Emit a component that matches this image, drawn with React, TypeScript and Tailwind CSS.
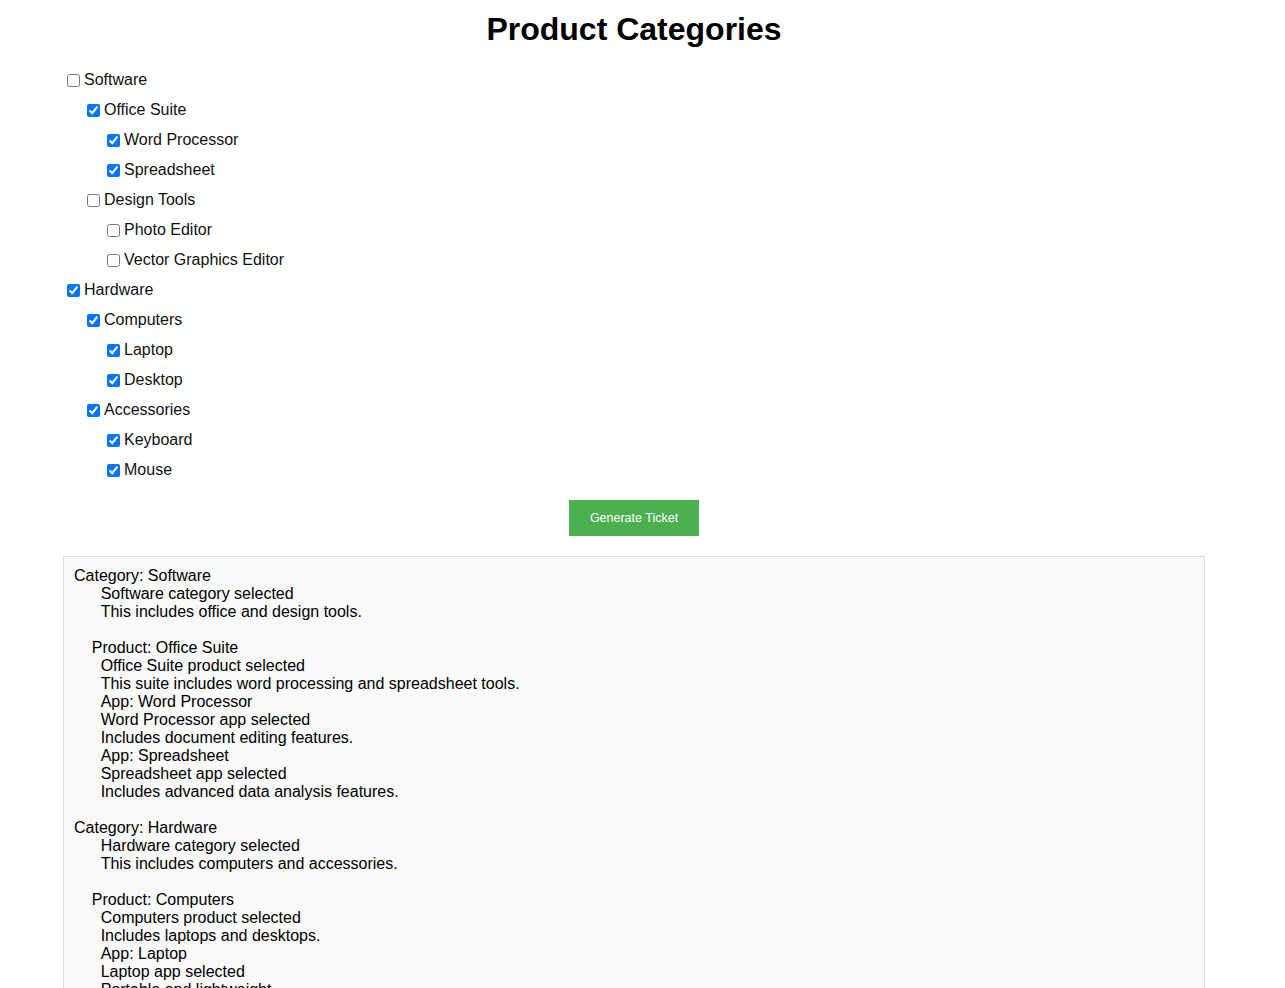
import { useState } from "react";

type Node = {
  id: string;
  label: string;
  level: number;
};

const nodes: Node[] = [
  { id: "software", label: "Software", level: 0 },
  { id: "office", label: "Office Suite", level: 1 },
  { id: "word", label: "Word Processor", level: 2 },
  { id: "sheet", label: "Spreadsheet", level: 2 },
  { id: "design", label: "Design Tools", level: 1 },
  { id: "photo", label: "Photo Editor", level: 2 },
  { id: "vector", label: "Vector Graphics Editor", level: 2 },
  { id: "hardware", label: "Hardware", level: 0 },
  { id: "computers", label: "Computers", level: 1 },
  { id: "laptop", label: "Laptop", level: 2 },
  { id: "desktop", label: "Desktop", level: 2 },
  { id: "accessories", label: "Accessories", level: 1 },
  { id: "keyboard", label: "Keyboard", level: 2 },
  { id: "mouse", label: "Mouse", level: 2 },
];

const initial: Record<string, boolean> = {
  software: false,
  office: true,
  word: true,
  sheet: true,
  design: false,
  photo: false,
  vector: false,
  hardware: true,
  computers: true,
  laptop: true,
  desktop: true,
  accessories: true,
  keyboard: true,
  mouse: true,
};

const ticket = `Category: Software
      Software category selected
      This includes office and design tools.

    Product: Office Suite
      Office Suite product selected
      This suite includes word processing and spreadsheet tools.
      App: Word Processor
      Word Processor app selected
      Includes document editing features.
      App: Spreadsheet
      Spreadsheet app selected
      Includes advanced data analysis features.

Category: Hardware
      Hardware category selected
      This includes computers and accessories.

    Product: Computers
      Computers product selected
      Includes laptops and desktops.
      App: Laptop
      Laptop app selected
      Portable and lightweight.
      App: Desktop
      Desktop app selected
      Powerful and expandable.

    Product: Accessories
      Accessories product selected
      Includes keyboards and mice.
      App: Keyboard
      Keyboard app selected
      Ergonomic typing.
      App: Mouse
      Mouse app selected
      Precise pointing.`;

const indent = ["pl-0", "pl-[20px]", "pl-[40px]"];

export default function App() {
  const [checked, setChecked] = useState(initial);

  const toggle = (id: string) =>
    setChecked((prev) => ({ ...prev, [id]: !prev[id] }));

  return (
    <div className="min-h-screen bg-white font-['Liberation_Sans',Arial,sans-serif] text-black">
      <div className="w-[1142px] ml-[63px] pt-[11px]">
        {/* TITLE */}
        <h1 className="text-center text-[32px] leading-[37px] font-bold">
          Product Categories
        </h1>

        {/* TREE */}
        <div className="mt-[17px] flex flex-col">
          {nodes.map((node) => (
            <label
              key={node.id}
              className={`h-[30px] flex items-center text-[16px] text-[#111] ${indent[node.level]}`}
            >
              <input
                type="checkbox"
                className="w-[13px] h-[13px] ml-[4px] mr-[4px] accent-[#0075ff]"
                checked={checked[node.id]}
                onChange={() => toggle(node.id)}
              />
              {node.label}
            </label>
          ))}
        </div>

        {/* BUTTON */}
        <div className="mt-[15px] flex justify-center">
          <button className="w-[130px] h-[36px] bg-[#4caf50] text-white text-[12.5px]">
            Generate Ticket
          </button>
        </div>

        {/* OUTPUT */}
        <pre className="mt-[20px] border border-[#ddd] bg-[#f9f9f9] p-[10px] text-[16px] leading-[18px] font-['Liberation_Sans',Arial,sans-serif] whitespace-pre-wrap">
          {ticket}
        </pre>
      </div>
    </div>
  );
}
